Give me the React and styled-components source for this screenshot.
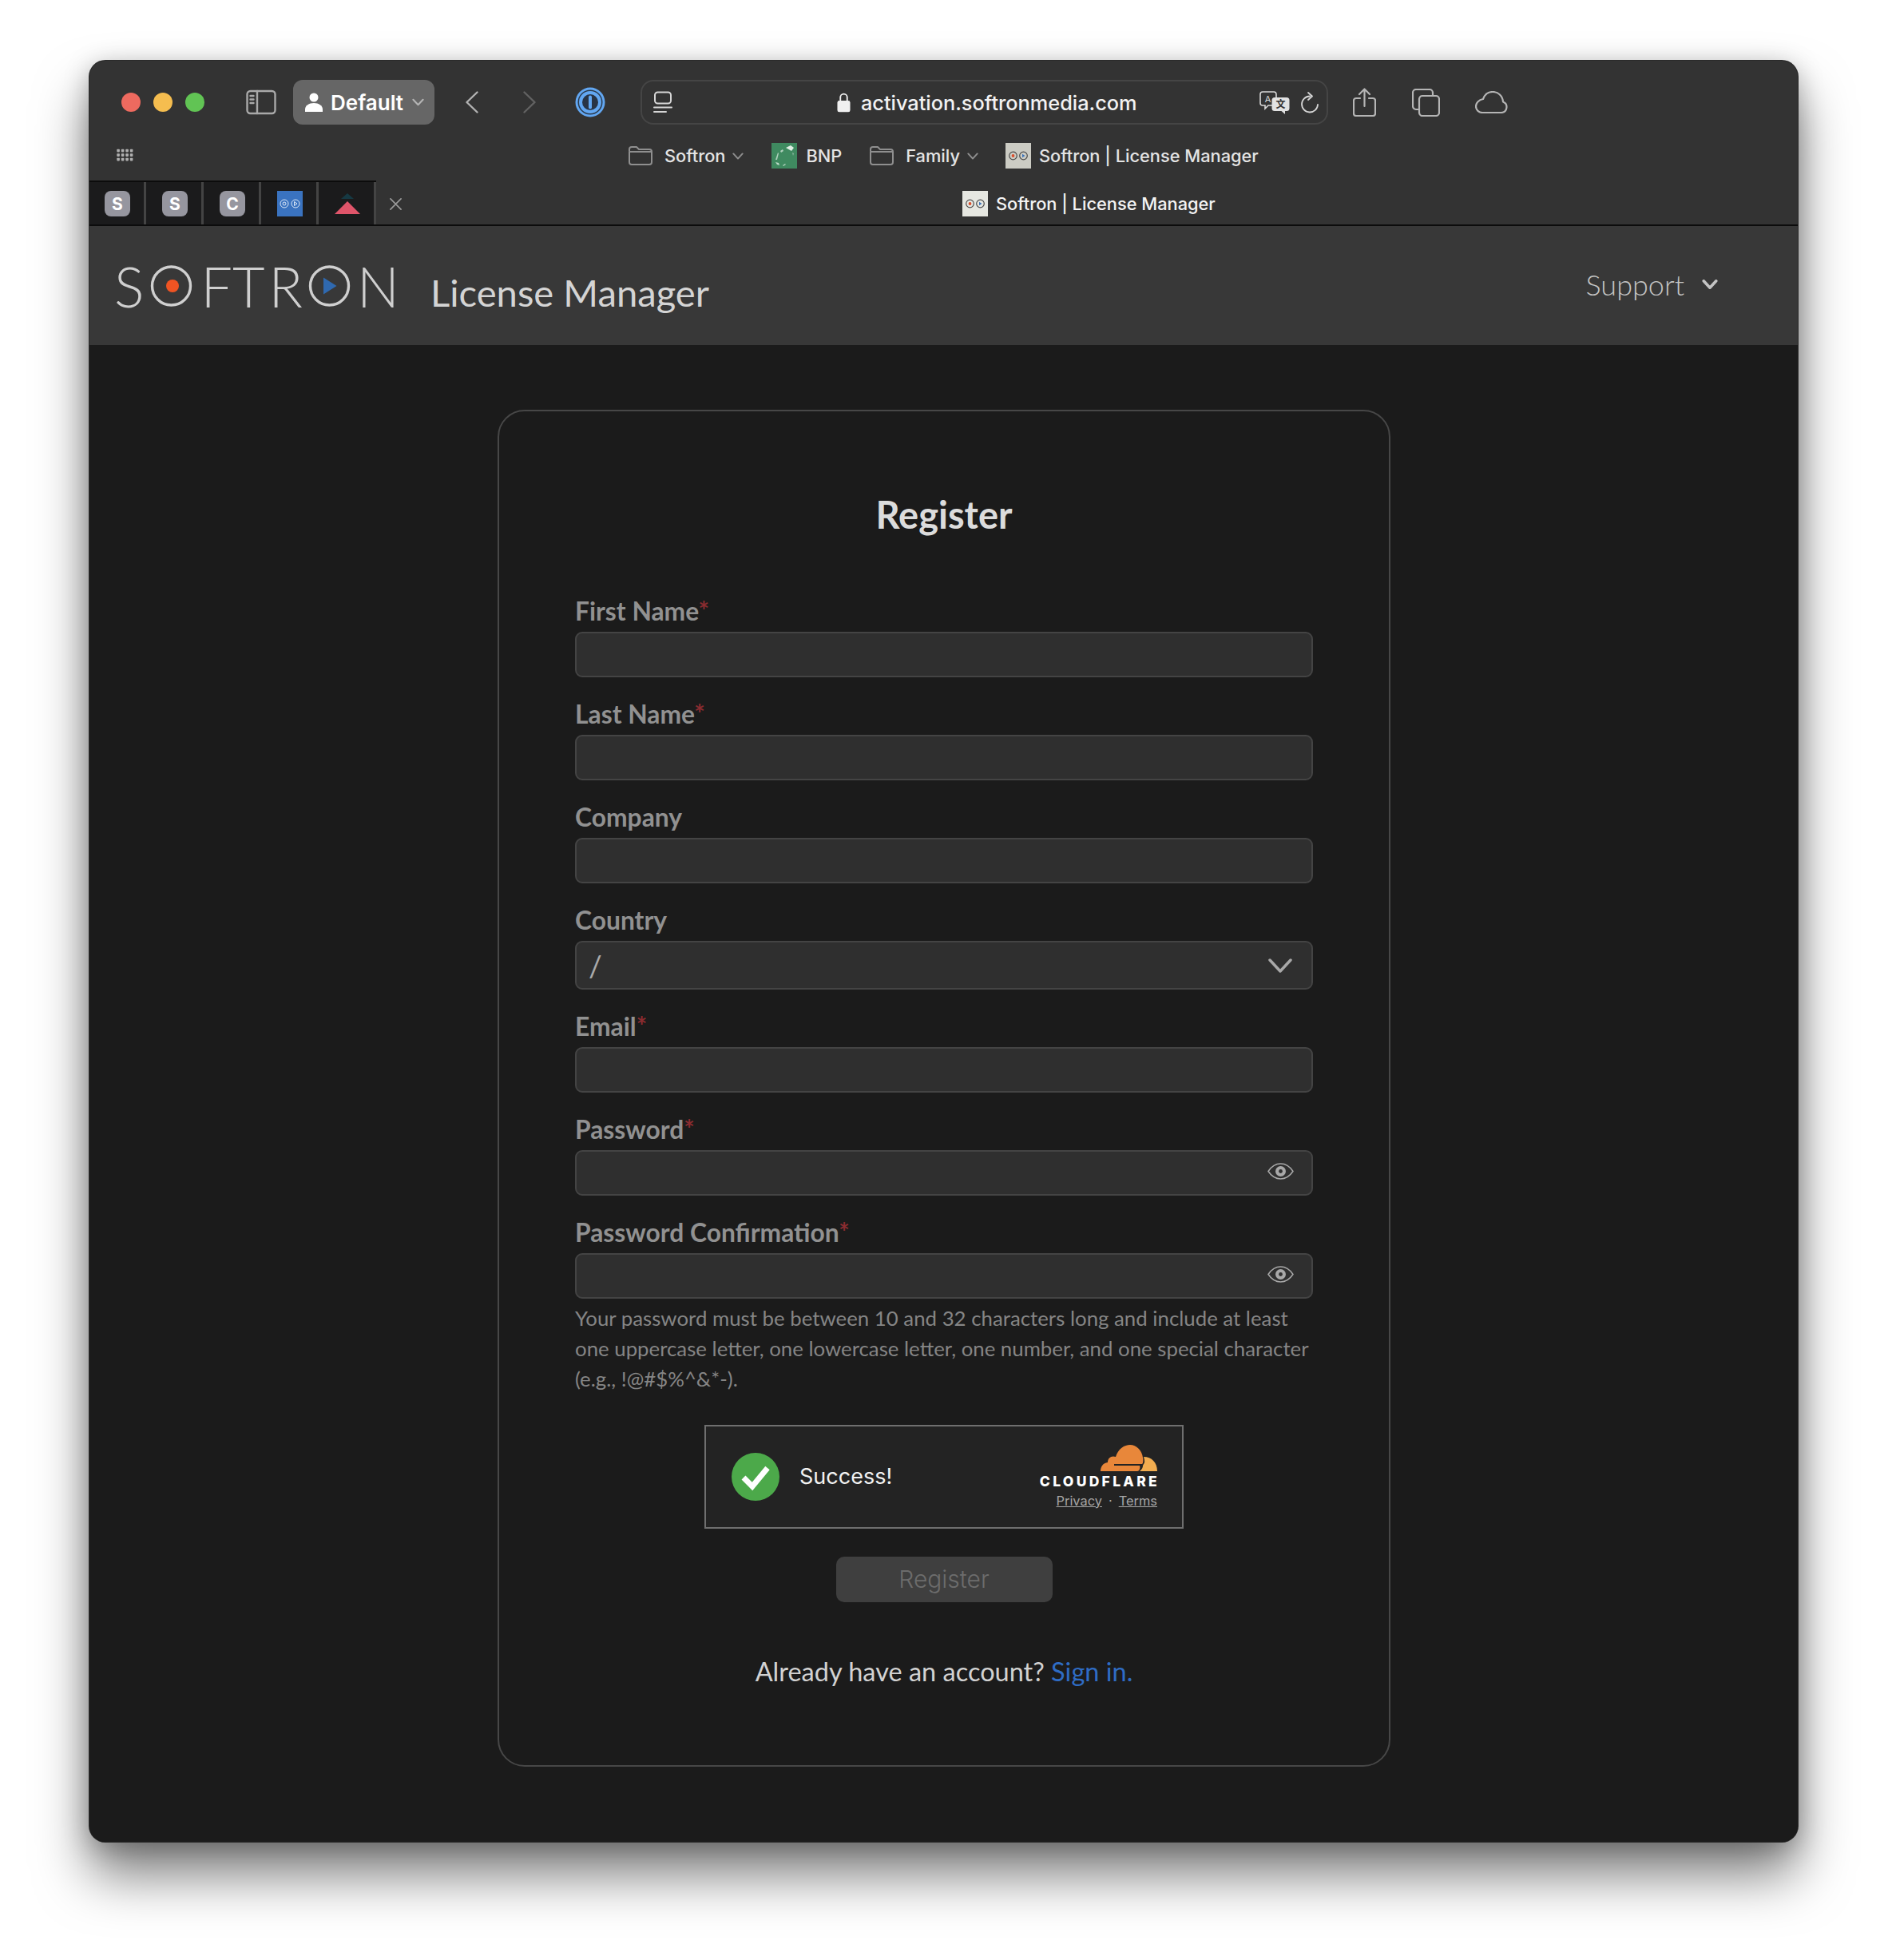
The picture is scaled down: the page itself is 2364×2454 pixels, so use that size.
import React from "react";
import styled, { createGlobalStyle } from "styled-components";

const GlobalStyle = createGlobalStyle`
  html, body {
    margin: 0;
    background: #fff;
  }
  * {
    box-sizing: border-box;
  }
`;

const Page = styled.div`
  width: 2364px;
  height: 2454px;
  padding: 76px 0 0 112px;
  overflow: hidden;
`;

const Browser = styled.div`
  width: 2139px;
  height: 2230px;
  border-radius: 20px;
  overflow: hidden;
  background: #1b1b1b;
  box-shadow: 0 0 0 1px #2a2a2a, 0 42px 66px rgba(0, 0, 0, 0.5), 0 6px 32px rgba(0, 0, 0, 0.26);
  font-family: Inter, "Liberation Sans", sans-serif;
  display: flex;
  flex-direction: column;
`;

const Chrome = styled.div`
  background: #333333;
  display: flex;
  flex-direction: column;
`;

const Toolbar = styled.div`
  height: 88px;
  padding: 24px 0 8px 40px;
  display: flex;
  align-items: center;
`;

const Lights = styled.div`
  display: flex;
  gap: 16px;
`;

const Light = styled.span`
  width: 24px;
  height: 24px;
  border-radius: 50%;
  background: ${(p) => p.$color};
`;

const Slot = styled.div`
  margin-left: ${(p) => p.$ml || 0}px;
  width: ${(p) => p.$w}px;
  height: ${(p) => p.$h}px;
  flex: none;
  display: flex;
  align-items: center;
  justify-content: center;

  svg {
    display: block;
    width: 100%;
    height: 100%;
  }
`;

const ProfilePill = styled.div`
  margin-left: 21px;
  width: 177px;
  height: 56px;
  border-radius: 12px;
  background: #666666;
  display: flex;
  align-items: center;
  padding-left: 15px;
  color: #fff;
  font-size: 26px;
  font-weight: 600;
`;

const ProfileName = styled.span`
  margin-left: 10px;
`;

const UrlBar = styled.div`
  margin-left: 44px;
  width: 861px;
  height: 56px;
  border: 2px solid #454545;
  border-radius: 16px;
  display: flex;
  align-items: center;
  padding: 0 10px 0 14px;
`;

const UrlText = styled.span`
  margin-left: 13px;
  color: #f2f2f2;
  font-size: 25.3px;
  font-weight: 500;
  white-space: nowrap;
`;

const BookmarksBar = styled.div`
  height: 62px;
  padding: 0 0 0 34px;
  display: flex;
  align-items: center;
`;

const Bookmark = styled.span`
  margin-left: ${(p) => p.$ml || 0}px;
  color: #e4e4e4;
  font-size: 21.8px;
  font-weight: 500;
  white-space: nowrap;
`;

const Favicon = styled.div`
  margin-left: ${(p) => p.$ml || 0}px;
  width: 32px;
  height: 32px;
  flex: none;
  background: ${(p) => p.$bg};
  display: flex;
  align-items: center;
  justify-content: center;

  svg {
    display: block;
    width: 100%;
    height: 100%;
  }
`;

const TabBar = styled.div`
  height: 57px;
  display: flex;
  align-items: stretch;
  border-bottom: 2px solid #0c0c0c;
`;

const PinnedTabs = styled.div`
  display: flex;
  background: #1b1b1c;
  border-top: 2px solid #0c0c0c;
`;

const PinnedTab = styled.div`
  width: 72px;
  padding: 11px 0 0 20px;
  border-right: 3px solid #444444;

  &:first-child {
    width: 71px;
    padding-left: 19px;
  }
`;

const LetterBadge = styled.div`
  width: 32px;
  height: 32px;
  border-radius: 8px;
  background: #96969f;
  color: #fff;
  font-size: 21px;
  font-weight: 700;
  display: flex;
  align-items: center;
  justify-content: center;
`;

const TabIcon = styled.div`
  width: 32px;
  height: 32px;
  background: ${(p) => p.$bg || "transparent"};

  svg {
    display: block;
    width: 100%;
    height: 100%;
  }
`;

const ActiveTab = styled.div`
  padding-top: 3px;
  display: flex;
  align-items: center;
`;

const ActiveTabTitle = styled.span`
  margin-left: 10px;
  color: #f4f4f4;
  font-size: 21.8px;
  font-weight: 500;
  white-space: nowrap;
`;

const TopNav = styled.header`
  height: 149px;
  flex: none;
  background: #383838;
  display: flex;
  align-items: flex-start;
  padding: 47px 0 0 31px;
`;

const Logo = styled.div`
  width: 344px;
  height: 56px;
  display: flex;
  align-items: center;
  color: #cfcfcf;
  font-family: Lato, sans-serif;
  font-weight: 300;
  font-size: 70px;
  line-height: 56px;
`;

const LogoLetter = styled.span`
  margin-left: ${(p) => p.$ml || 0}px;
`;

const LogoRing = styled.svg`
  margin-left: ${(p) => p.$ml || 0}px;
  width: 53px;
  height: 56px;
  flex: none;
`;

const AppName = styled.div`
  margin: 8px 0 0 52px;
  color: #d4d4d4;
  font-family: Lato, sans-serif;
  font-size: 47.2px;
  line-height: 56px;
  white-space: nowrap;
`;

const SupportMenu = styled.div`
  margin: -2px 0 0 auto;
  padding: 0 100px 0 0;
  display: flex;
  align-items: center;
  gap: 22px;
  height: 56px;
  color: #c4c4c4;
  font-family: Lato, sans-serif;
  font-size: 36px;
  font-weight: 300;
`;

const Main = styled.main`
  flex: 1;
  padding-top: 81px;
  display: flex;
  justify-content: center;
  background: #1b1b1b;
`;

const Card = styled.section`
  width: 1118px;
  height: 1699px;
  margin-left: 1px;
  border: 2px solid #474747;
  border-radius: 34px;
  padding: 96px 95px 0;
  font-family: Lato, sans-serif;
`;

const Title = styled.h1`
  margin: 0 0 70px;
  height: 66px;
  text-align: center;
  color: #dcdcdc;
  font-size: 47px;
  font-weight: 700;
  line-height: 66px;
`;

const Form = styled.form`
  display: flex;
  flex-direction: column;
  gap: 28px;
`;

const Field = styled.div`
  display: flex;
  flex-direction: column;
  gap: 8px;
`;

const Label = styled.label`
  height: 36px;
  color: #919191;
  font-size: 31.8px;
  font-weight: 700;
  line-height: 36px;
`;

const Required = styled.span`
  color: #8b2c30;
`;

const InputBox = styled.div`
  height: ${(p) => p.$h || 57}px;
  background: #2f2f2f;
  border: 2px solid #444444;
  border-radius: 9px;
  display: flex;
  align-items: center;
  justify-content: space-between;
  padding: ${(p) => (p.$select ? "0 24px 0 15px" : "0 22px 0 15px")};
`;

const SelectValue = styled.span`
  color: #aaaaaa;
  font-size: 37px;
`;

const EyeIcon = styled.svg`
  margin: 0 0 4px auto;
  width: 33px;
  height: 21px;
`;

const SelectChevron = styled.svg`
  width: 30px;
  height: 18px;
`;

const HelpText = styled.p`
  margin: -23.500px 0 0;
  color: #858585;
  font-size: 25.8px;
  line-height: 38px;
  white-space: nowrap;
`;

const Turnstile = styled.div`
  margin: 11px auto 0;
  width: 600px;
  height: 130px;
  background: #232323;
  border: 2px solid #6f6f6f;
  display: flex;
  align-items: center;
  padding: 0 31px 0 32px;
  font-family: Inter, sans-serif;
`;

const SuccessIcon = styled.svg`
  width: 60px;
  height: 60px;
  flex: none;
`;

const SuccessText = styled.span`
  margin-left: 25px;
  color: #f2f2f2;
  font-size: 27px;
`;

const CfBlock = styled.div`
  margin-left: auto;
  display: flex;
  flex-direction: column;
  align-items: flex-end;
`;

const CfCloud = styled.svg`
  width: 72px;
  height: 33px;
`;

const CfName = styled.span`
  margin-top: 4px;
  margin-right: -3px;
  color: #fff;
  font-size: 17.5px;
  line-height: 17px;
  font-weight: 800;
  letter-spacing: 3.3px;
`;

const CfLinks = styled.div`
  margin-top: 6px;
  display: flex;
  align-items: center;
  gap: 8px;
  color: #a6a6a6;
  font-size: 16.4px;
  line-height: 20px;
`;

const CfLink = styled.span`
  text-decoration: underline;
`;

const SubmitButton = styled.button`
  margin: 7px auto 0;
  width: 271px;
  height: 57px;
  background: #3f3f3f;
  border: 0;
  border-radius: 10px;
  color: #6c6c6c;
  font-family: Inter, sans-serif;
  font-size: 30px;
  font-weight: 300;
`;

const SignInLine = styled.p`
  margin: 62px 0 0;
  text-align: center;
  color: #d2d2d2;
  font-size: 32.5px;
  line-height: 50px;
`;

const SignInLink = styled.a`
  color: #2f6cc4;
`;

const stroke = { fill: "none", stroke: "currentColor", strokeLinecap: "round", strokeLinejoin: "round" };

const SidebarGlyph = () => (
  <svg viewBox="0 0 38 32" style={{ color: "#a9a9a9" }} {...stroke} strokeWidth="2.400">
    <rect x="1.500" y="2" width="35" height="28" rx="4" />
    <path d="M14 2v28M5.500 8h4M5.500 12.500h4M5.500 17h4" />
  </svg>
);

const UserGlyph = () => (
  <svg viewBox="0 0 22 24" width="22" height="24" fill="#fff">
    <circle cx="11" cy="6" r="5.500" />
    <path d="M0 24v-3c0-5 5-8 11-8s11 3 11 8v3z" />
  </svg>
);

const SmallChevron = ({ color = "#a8a8a8", w = 15, h = 10, sw = 2.2 }) => (
  <svg viewBox="0 0 16 10" width={w} height={h} style={{ color }} {...stroke} strokeWidth={sw}>
    <path d="M1.500 1.500 8 8.500l6.500-7" />
  </svg>
);

const OnePassword = () => (
  <svg viewBox="0 0 38 38">
    <circle cx="19" cy="19" r="18.500" fill="#62a7f2" />
    <circle cx="19" cy="19" r="15.500" fill="#2b3a4c" />
    <circle cx="19" cy="19" r="14" fill="#62a7f2" />
    <circle cx="19" cy="19" r="10" fill="#283445" />
    <rect x="17" y="10.500" width="4" height="17" rx="2" fill="#62a7f2" />
  </svg>
);

const ReaderGlyph = () => (
  <svg viewBox="0 0 24 28" style={{ color: "#d6d6d6" }} {...stroke} strokeWidth="2">
    <rect x="2" y="1.500" width="20" height="14" rx="3.500" />
    <path d="M1 20.500h22M1 26h15" />
  </svg>
);

const LockGlyph = () => (
  <svg viewBox="0 0 18 26" fill="none">
    <path d="M4.500 12V6.500a4.500 4.500 0 0 1 9 0V12" stroke="#f0f0f0" strokeWidth="2" />
    <rect x="0.500" y="11" width="17" height="15" rx="2.500" fill="#f0f0f0" />
  </svg>
);

const TranslateGlyph = () => (
  <svg viewBox="0 0 38 29">
    <path d="M4 1h14a3 3 0 0 1 3 3v11a3 3 0 0 1-3 3h-7l-4 4v-4H4a3 3 0 0 1-3-3V4a3 3 0 0 1 3-3z" fill="#333" stroke="#d8d8d8" strokeWidth="1.600" />
    <text x="10.500" y="13.500" fontSize="11" fill="#d8d8d8" textAnchor="middle" fontFamily="Inter, sans-serif">A</text>
    <path d="M19 8h15a3.500 3.500 0 0 1 3.500 3.500v10a3.500 3.500 0 0 1-3.500 3.500h-2v4l-4.500-4H19a3.500 3.500 0 0 1-3.500-3.500v-10A3.500 3.500 0 0 1 19 8z" fill="#e2e2e2" />
    <text x="26.500" y="21" fontSize="12" fontWeight="700" fill="#333" textAnchor="middle" fontFamily="Noto Sans CJK SC, sans-serif">文</text>
  </svg>
);

const ReloadGlyph = () => (
  <svg viewBox="0 0 23 27" style={{ color: "#d6d6d6" }} {...stroke} strokeWidth="1.800">
    <path d="M12 5.500a10 10 0 1 0 10 10.500" />
    <path d="M10 1l5 4.500-5 4.500" />
  </svg>
);

const ShareGlyph = () => (
  <svg viewBox="0 0 29 36" style={{ color: "#b5b5b5" }} {...stroke} strokeWidth="2.200">
    <path d="M9 13H4a3 3 0 0 0-3 3v16a3 3 0 0 0 3 3h21a3 3 0 0 0 3-3V16a3 3 0 0 0-3-3h-5" />
    <path d="M14.500 23V2M8 8l6.500-6.500L21 8" />
  </svg>
);

const TabsGlyph = () => (
  <svg viewBox="0 0 35 35" style={{ color: "#b5b5b5" }} {...stroke} strokeWidth="2.200">
    <path d="M8 26H5a4 4 0 0 1-4-4V5a4 4 0 0 1 4-4h17a4 4 0 0 1 4 4v3" />
    <rect x="9" y="9" width="25" height="25" rx="4" />
  </svg>
);

const CloudGlyph = () => (
  <svg viewBox="0 0 41 28" style={{ color: "#b5b5b5" }} {...stroke} strokeWidth="2.200">
    <path d="M9 27h24a7 7 0 0 0 2-13.500C34.500 6 29 1 22 1c-6 0-10 3.500-12 9C5 11 1 14.500 1 19c0 5 4 8 8 8z" />
  </svg>
);

const AppsGlyph = () => (
  <svg viewBox="0 0 23 18" fill="#b0b0b0">
    {[1.5, 7, 12.5].flatMap((y) =>
      [2, 7.5, 13, 18.5].map((x) => <rect key={`${x}-${y}`} x={x - 1.7} y={y - 0.7} width="3.600" height="3.600" rx="0.800" />)
    )}
  </svg>
);

const FolderGlyph = () => (
  <svg viewBox="0 0 30 24" style={{ color: "#8f8f8f" }} {...stroke} strokeWidth="2">
    <path d="M1 6V4a3 3 0 0 1 3-3h6l3 3h13a3 3 0 0 1 3 3v13a3 3 0 0 1-3 3H4a3 3 0 0 1-3-3V7h28" />
  </svg>
);

const SoftronIcon = ({ ring = "#4a4a4a" }) => (
  <svg viewBox="0 0 32 32" fill="none">
    <circle cx="9.500" cy="16" r="4.800" stroke={ring} strokeWidth="1.200" />
    <circle cx="9.500" cy="16" r="1.900" fill="#d9502e" />
    <circle cx="22.500" cy="16" r="4.800" stroke={ring} strokeWidth="1.200" />
    <path d="M21 13.700l3.500 2.300-3.500 2.300z" fill="#3a72b8" />
  </svg>
);

const BnpIcon = () => (
  <svg viewBox="0 0 32 32" fill="#dfeee4">
    <path d="M18 6l6-3 4 3-3 4z" />
    <path d="M11 10l3-2 1 2-3 2z" opacity=".7" />
    <path d="M5 21l3-9 1 1-2 8z" opacity=".7" />
    <path d="M5 24l4 1 1 3-3-1z" opacity=".8" />
    <path d="M14 28l3-2 1 1-3 2z" opacity=".7" />
    <path d="M26 12l2 1-1 3z" opacity=".5" />
  </svg>
);

const BlueTabIcon = () => (
  <svg viewBox="0 0 32 32" fill="none" stroke="#dce8f7" strokeWidth="1">
    <circle cx="9" cy="16" r="5" />
    <circle cx="9" cy="16" r="2" />
    <circle cx="23" cy="16" r="5" />
    <path d="M21.500 13.500l3.500 2.500-3.500 2.500z" />
  </svg>
);

const TriangleTabIcon = () => (
  <svg viewBox="0 0 32 32">
    <path d="M8 10l8-7 8 7z" fill="#163943" />
    <path d="M0 29L16 13l16 16z" fill="#e0556a" />
  </svg>
);

const CloseGlyph = () => (
  <svg viewBox="0 0 16 16" style={{ color: "#9a9a9a" }} {...stroke} strokeWidth="1.800">
    <path d="M1 1l14 14M15 1L1 15" />
  </svg>
);

const Eye = () => (
  <EyeIcon viewBox="0 0 33 21" fill="none">
    <path d="M1 10.500C5 4.500 10 1 16.500 1S28 4.500 32 10.500C28 16.500 23 20 16.500 20S5 16.500 1 10.500z" stroke="#a8a8a8" strokeWidth="1.500" />
    <circle cx="16.500" cy="10.500" r="6.500" fill="#a8a8a8" />
    <circle cx="16.500" cy="10.500" r="2.400" fill="#2f2f2f" />
  </EyeIcon>
);

const fields = [
  { label: "First Name", required: true },
  { label: "Last Name", required: true },
  { label: "Company" },
  { label: "Country", select: true },
  { label: "Email", required: true },
  { label: "Password", required: true, eye: true },
  { label: "Password Confirmation", required: true, eye: true },
];

const App = () => (
  <>
    <GlobalStyle />
    <Page>
      <Browser>
        <Chrome>
          <Toolbar>
            <Lights>
              <Light $color="#ee6a5f" />
              <Light $color="#f5bd4f" />
              <Light $color="#61c454" />
            </Lights>
            <Slot $ml={52} $w={38} $h={32}><SidebarGlyph /></Slot>
            <ProfilePill>
              <UserGlyph />
              <ProfileName>Default</ProfileName>
              <Slot $ml={11} $w={15} $h={10}><SmallChevron color="#b4b4b4" /></Slot>
            </ProfilePill>
            <Slot $ml={39} $w={16} $h={28}>
              <svg viewBox="0 0 16 28" style={{ color: "#b2b2b2" }} {...stroke} strokeWidth="2.400"><path d="M14.500 1.500 1.500 14l13 12.500" /></svg>
            </Slot>
            <Slot $ml={56} $w={16} $h={28}>
              <svg viewBox="0 0 16 28" style={{ color: "#626262" }} {...stroke} strokeWidth="2.400"><path d="M1.500 1.500 14.500 14l-13 12.500" /></svg>
            </Slot>
            <Slot $ml={49} $w={38} $h={38}><OnePassword /></Slot>
            <UrlBar>
              <Slot $w={24} $h={28}><ReaderGlyph /></Slot>
              <Slot $ml={206} $w={17} $h={26}><LockGlyph /></Slot>
              <UrlText>activation.softronmedia.com</UrlText>
              <Slot $ml={153} $w={38} $h={29}><TranslateGlyph /></Slot>
              <Slot $ml={13} $w={23} $h={27}><ReloadGlyph /></Slot>
            </UrlBar>
            <Slot $ml={31} $w={29} $h={36}><ShareGlyph /></Slot>
            <Slot $ml={45} $w={35} $h={35}><TabsGlyph /></Slot>
            <Slot $ml={44} $w={41} $h={28}><CloudGlyph /></Slot>
          </Toolbar>
          <BookmarksBar>
            <Slot $w={23} $h={18}><AppsGlyph /></Slot>
            <Slot $ml={618} $w={30} $h={24}><FolderGlyph /></Slot>
            <Bookmark $ml={15}>Softron</Bookmark>
            <Slot $ml={9} $w={14} $h={9}><SmallChevron color="#8f8f8f" /></Slot>
            <Favicon $ml={35} $bg="#3f8a60"><BnpIcon /></Favicon>
            <Bookmark $ml={11}>BNP</Bookmark>
            <Slot $ml={35} $w={30} $h={24}><FolderGlyph /></Slot>
            <Bookmark $ml={15}>Family</Bookmark>
            <Slot $ml={9} $w={14} $h={9}><SmallChevron color="#8f8f8f" /></Slot>
            <Favicon $ml={34} $bg="#ccccc4"><SoftronIcon /></Favicon>
            <Bookmark $ml={10}>Softron | License Manager</Bookmark>
          </BookmarksBar>
          <TabBar>
            <PinnedTabs>
              <PinnedTab><LetterBadge>S</LetterBadge></PinnedTab>
              <PinnedTab><LetterBadge>S</LetterBadge></PinnedTab>
              <PinnedTab><LetterBadge>C</LetterBadge></PinnedTab>
              <PinnedTab><TabIcon $bg="#3a73c0"><BlueTabIcon /></TabIcon></PinnedTab>
              <PinnedTab><TabIcon><TriangleTabIcon /></TabIcon></PinnedTab>
            </PinnedTabs>
            <ActiveTab>
              <Slot $ml={17} $w={15} $h={15}><CloseGlyph /></Slot>
              <Favicon $ml={702} $bg="#e6e7e1"><SoftronIcon /></Favicon>
              <ActiveTabTitle>Softron | License Manager</ActiveTabTitle>
            </ActiveTab>
          </TabBar>
        </Chrome>
        <TopNav>
          <Logo>
            <LogoLetter>S</LogoLetter>
            <LogoRing $ml={8} viewBox="0 0 53 56" fill="none">
              <circle cx="26.500" cy="28" r="24" stroke="#cfcfcf" strokeWidth="3.400" />
              <circle cx="28" cy="28" r="8" fill="#ef5423" />
            </LogoRing>
            <LogoLetter $ml={10}>F</LogoLetter>
            <LogoLetter $ml={0}>T</LogoLetter>
            <LogoLetter $ml={5}>R</LogoLetter>
            <LogoRing $ml={7} viewBox="0 0 53 56" fill="none">
              <circle cx="26.500" cy="28" r="24" stroke="#cfcfcf" strokeWidth="3.400" />
              <path d="M19 17.500 35.500 28 19 38.500z" fill="#2f69b0" />
            </LogoRing>
            <LogoLetter $ml={8}>N</LogoLetter>
          </Logo>
          <AppName>License Manager</AppName>
          <SupportMenu>
            Support
            <Slot $w={20} $h={12}><SmallChevron color="#c4c4c4" w={20} h={12} sw={3} /></Slot>
          </SupportMenu>
        </TopNav>
        <Main>
          <Card>
            <Title>Register</Title>
            <Form>
              {fields.map((f) => (
                <Field key={f.label}>
                  <Label>
                    {f.label}
                    {f.required && <Required>*</Required>}
                  </Label>
                  <InputBox $h={f.select ? 61 : 57} $select={f.select}>
                    {f.select && <SelectValue>/</SelectValue>}
                    {f.select && (
                      <SelectChevron viewBox="0 0 30 18" style={{ color: "#a8a8a8" }} {...stroke} strokeWidth="3.500">
                        <path d="M2 2l13 14L28 2" />
                      </SelectChevron>
                    )}
                    {f.eye && <Eye />}
                  </InputBox>
                </Field>
              ))}
              <HelpText>
                Your password must be between 10 and 32 characters long and include at least
                <br />
                one uppercase letter, one lowercase letter, one number, and one special character
                <br />
                (e.g., !@#$%^&amp;*-).
              </HelpText>
              <Turnstile>
                <SuccessIcon viewBox="0 0 60 60">
                  <circle cx="30" cy="30" r="30" fill="#4ca94a" />
                  <path d="M15 31l11 11 19-23" fill="none" stroke="#fff" strokeWidth="7" />
                </SuccessIcon>
                <SuccessText>Success!</SuccessText>
                <CfBlock>
                  <CfCloud viewBox="0 0 72 33">
                    <path d="M1 33C1 27 4 23 10 22 10 16 15 13 20 15 23 5 31 0 38 0 46 0 53 7 54 16 55 20 54 24 53 24L18 24 18 26 50 26C51 28 50 33 47 33z" fill="#e8873a" />
                    <path d="M55 15C65 15 72 22 72 33L50 33C53 31 54 28 54 26L55 24C57 22 56 18 55 15z" fill="#f2ad50" />
                  </CfCloud>
                  <CfName>CLOUDFLARE</CfName>
                  <CfLinks>
                    <CfLink>Privacy</CfLink>
                    <span>·</span>
                    <CfLink>Terms</CfLink>
                  </CfLinks>
                </CfBlock>
              </Turnstile>
              <SubmitButton type="button">Register</SubmitButton>
            </Form>
            <SignInLine>
              Already have an account? <SignInLink>Sign in.</SignInLink>
            </SignInLine>
          </Card>
        </Main>
      </Browser>
    </Page>
  </>
);

export default App;
